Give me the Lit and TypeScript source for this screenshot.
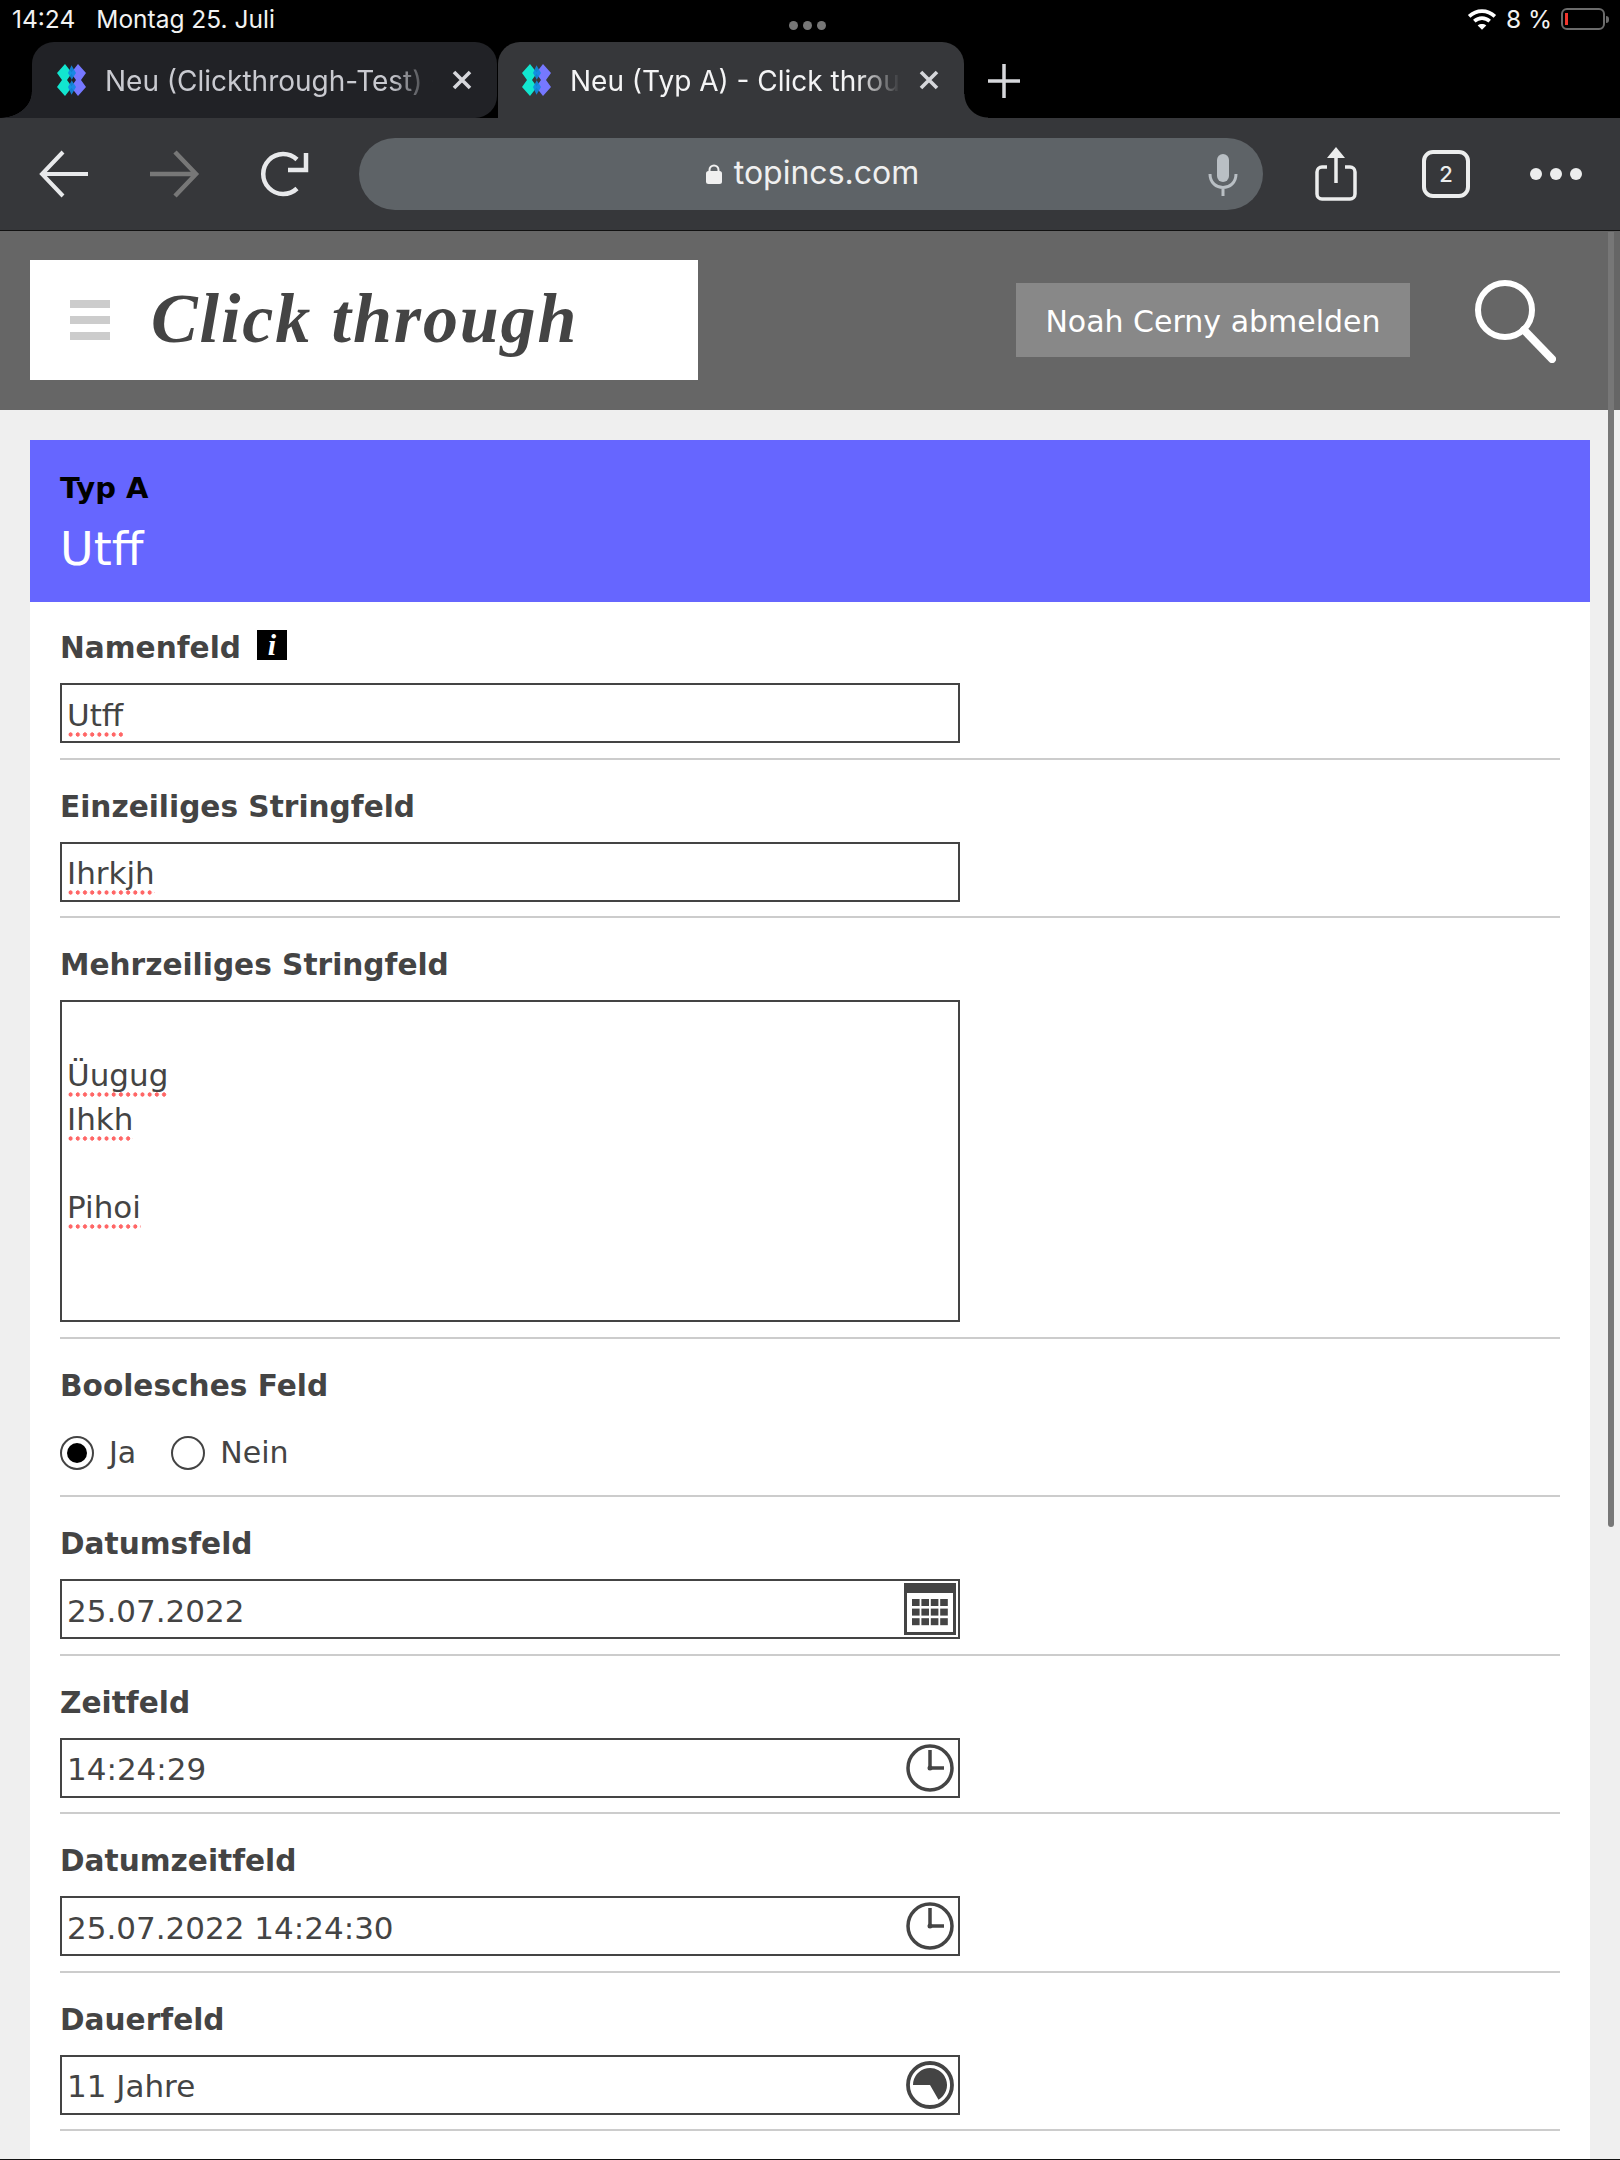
import { LitElement, html, svg, css } from 'lit';
import { customElement } from 'lit/decorators.js';

const favicon = html`<svg class="fav" width="32" height="32" viewBox="0 0 32 32">
  <path fill="#12e6cf" d="M9 0l7 9-5 7 5 7-7 9-8-9 5-7-5-7z"/>
  <path fill="#7678ff" d="M22 0l8 9-5 7 5 7-8 9-7-9 5-7-5-7z"/>
  <path fill="#0f8ae0" d="M15.500 1.300l4.500 7.700-4.500 7 4.500 7-4.500 7.700-3.500-7.700 4-7-4-7z" opacity=".9"/>
</svg>`;

const closeX = html`<svg class="close" width="22" height="22" viewBox="0 0 22 22"><path d="M3 3l16 16M19 3L3 19" stroke="#d6d7db" stroke-width="3.600" fill="none"/></svg>`;

const clock = html`<svg class="field-icon" width="52" height="52" viewBox="0 0 52 52" fill="none" stroke="#444">
  <circle cx="26" cy="26" r="22" stroke-width="3.500"/>
  <path d="M26 8v18h14" stroke-width="3.500"/>
  <circle cx="26" cy="26" r="2.500" fill="#444" stroke="none"/>
</svg>`;

const calendar = html`<svg class="field-icon" width="52" height="52" viewBox="0 0 52 52">
  <rect width="52" height="52" fill="#444"/>
  <rect x="3" y="10" width="46" height="39" fill="#fff"/>
  ${[0, 1, 2].map((r) => [0, 1, 2, 3].map((c) => svg`<rect x=${8 + c * 9.4} y=${16 + r * 9.6} width="7.600" height="7" fill="#444"/>`))}
</svg>`;

const duration = html`<svg class="field-icon" width="52" height="52" viewBox="0 0 52 52">
  <circle cx="26" cy="26" r="22" fill="none" stroke="#444" stroke-width="3.800"/>
  <path d="M26 26H9A17 17 0 1 1 34.500 40.700z" fill="#444"/>
</svg>`;

@customElement('app-root')
export class AppRoot extends LitElement {
  static styles = css`
    :host {
      display: block;
      position: relative;
      width: 1620px;
      height: 2160px;
      overflow: hidden;
      background: #efefef;
      font-family: 'DejaVu Sans', sans-serif;
      color: #444;
    }

    /* ios chrome */
    .status {
      height: 42px;
      background: #000;
      color: #f2f2f2;
      font: 24.500px Inter, sans-serif;
      position: relative;
      display: flex;
      align-items: center;
      padding: 0 15px 4px 12px;
      box-sizing: border-box;
    }
    .status .date {
      margin-left: 21px;
    }
    .status .right {
      margin-left: auto;
      display: flex;
      align-items: center;
      gap: 9px;
    }
    .dots3 {
      position: absolute;
      left: 789px;
      top: 21px;
      display: flex;
      gap: 5px;
    }
    .dots3 i {
      width: 9px;
      height: 9px;
      border-radius: 50%;
      background: #777;
    }
    .battery {
      width: 44px;
      height: 22px;
      border: 2px solid #6b6b6b;
      border-radius: 6px;
      box-sizing: border-box;
      position: relative;
    }
    .battery::before {
      content: '';
      position: absolute;
      left: 2px;
      top: 3px;
      bottom: 3px;
      width: 3px;
      background: #f0352c;
    }
    .battery::after {
      content: '';
      position: absolute;
      right: -6px;
      top: 6px;
      width: 3px;
      height: 7px;
      background: #6b6b6b;
      border-radius: 0 3px 3px 0;
    }

    .tabs {
      height: 76px;
      background: #000;
      display: flex;
      align-items: stretch;
      padding-left: 32px;
      font: 28px Inter, sans-serif;
    }
    .tab {
      position: relative;
      width: 465px;
      display: flex;
      align-items: center;
      box-sizing: border-box;
      padding: 0 24px 0 24px;
      border-radius: 22px 22px 0 0;
    }
    .tab.back {
      background: #212226;
      color: #c9cad0;
      border-radius: 22px 22px 22px 0;
      z-index: 1;
    }
    .tab.back::before {
      content: '';
      position: absolute;
      left: -32px;
      bottom: 0;
      width: 32px;
      height: 26px;
      background: radial-gradient(ellipse 32px 26px at 0 0, #000 98%, #212226 100%);
    }
    .tab.front {
      background: #36373a;
      color: #f4f4f5;
      width: 466px;
      margin-left: 1px;
      padding-left: 23px;
    }
    .tab.front::before {
      content: '';
      position: absolute;
      left: -24px;
      bottom: 0;
      width: 24px;
      height: 24px;
      background: #36373a;
      z-index: -1;
    }
    .tab.front::after {
      content: '';
      position: absolute;
      right: -24px;
      bottom: 0;
      width: 24px;
      height: 24px;
      background: radial-gradient(circle at 100% 0, #000 23px, #36373a 24px);
    }
    .tab .title {
      flex: 1;
      margin-left: 17px;
      padding-top: 2px;
      white-space: nowrap;
      overflow: hidden;
      -webkit-mask-image: linear-gradient(90deg, #000 86%, transparent 99%);
      mask-image: linear-gradient(90deg, #000 86%, transparent 99%);
    }
    .tab .close {
      margin-left: 14px;
      flex: none;
    }
    .tabs .plus {
      margin: 20px 0 0 23px;
      align-self: flex-start;
    }

    .toolbar {
      height: 112px;
      background: #36373a;
      display: flex;
      align-items: center;
      position: relative;
      border-bottom: 1px solid #111;
      box-sizing: content-box;
    }
    .toolbar svg {
      flex: none;
    }
    .url {
      width: 904px;
      height: 72px;
      border-radius: 36px;
      background: #5e6367;
      margin-left: 49px;
      color: #f0f0f0;
      font: 32px Inter, sans-serif;
      display: flex;
      align-items: center;
      justify-content: center;
      position: relative;
      gap: 12px;
      padding-left: 3px;
      box-sizing: border-box;
    }
    .url span {
      margin-top: -3px;
    }
    .url .mic {
      position: absolute;
      right: 25px;
      top: 16px;
    }
    .tabcount {
      width: 48px;
      height: 48px;
      border: 4px solid #eceded;
      border-radius: 11px;
      box-sizing: border-box;
      display: flex;
      align-items: center;
      justify-content: center;
      color: #eceded;
      font: 500 22px Inter, sans-serif;
      margin-left: 65px;
    }
    .more {
      display: flex;
      gap: 8px;
      margin-left: 60px;
    }
    .more i {
      width: 12px;
      height: 12px;
      border-radius: 50%;
      background: #eceded;
    }

    /* site header */
    .site {
      height: 179px;
      background: #666;
      display: flex;
      align-items: flex-start;
      padding: 29px 0 0 30px;
      box-sizing: border-box;
    }
    .logo {
      width: 668px;
      height: 120px;
      background: #fff;
      display: flex;
      align-items: center;
      padding-left: 40px;
      box-sizing: border-box;
    }
    .burger {
      width: 40px;
      display: flex;
      flex-direction: column;
      gap: 8px;
    }
    .burger i {
      height: 8px;
      background: #ccc;
    }
    .logo h1 {
      margin: -3px 0 0 41px;
      font: italic bold 70px 'Liberation Serif', serif;
      letter-spacing: 1.900px;
      color: #444;
    }
    .logout {
      margin: 23px 0 0 318px;
      width: 394px;
      height: 74px;
      background: #888;
      color: #fff;
      font-size: 30px;
      display: flex;
      align-items: center;
      justify-content: center;
      padding-top: 2px;
      box-sizing: border-box;
    }
    .search {
      margin: 19px 0 0 64px;
    }

    /* form */
    main {
      padding: 30px 30px 0;
    }
    .card-head {
      background: #6666ff;
      height: 162px;
      padding: 30px 30px 0;
      box-sizing: border-box;
    }
    .card-head .type {
      color: #000;
      font-weight: bold;
      font-size: 29px;
      line-height: 36px;
    }
    .card-head .name {
      color: #fff;
      font-size: 46px;
      line-height: 62px;
      margin-top: 12px;
    }
    .card-body {
      background: #fff;
      padding: 0 30px 200px;
    }
    .row {
      border-bottom: 2px solid #ccc;
      padding: 27px 0 14.500px;
      width: 1500px;
    }
    .row:first-child {
      padding-top: 26px;
    }
    .label {
      display: flex;
      align-items: center;
      font-weight: bold;
      font-size: 29.600px;
      line-height: 40px;
      margin-bottom: 15px;
      gap: 16px;
    }
    .info {
      width: 30px;
      height: 30px;
      background: #000;
      color: #fff;
      font: italic bold 30px/30px 'Liberation Serif', serif;
      text-align: center;
      margin-top: -6px;
    }
    .input {
      width: 900px;
      height: 60px;
      border: 2px solid #444;
      box-sizing: border-box;
      font-size: 31px;
      line-height: 56px;
      padding: 1.500px 0 0 5px;
      position: relative;
      background: #fff;
      white-space: nowrap;
    }
    .input.area {
      height: 322px;
      line-height: 44px;
      padding-top: 7px;
    }
    .input.area div {
      height: 44px;
    }
    .sp {
      padding-bottom: 4px;
      background: radial-gradient(circle, #f66 1.900px, transparent 2.400px) 0 100% / 7.200px 5px repeat-x;
    }
    .field-icon {
      position: absolute;
      right: 2px;
      top: 2px;
    }
    .bool {
      display: flex;
      align-items: flex-start;
      height: 60px;
      box-sizing: border-box;
      padding-top: 15px;
      font-size: 30px;
      line-height: 34px;
    }
    .radio {
      width: 34px;
      height: 34px;
      border-radius: 50%;
      border: 2px solid #444;
      box-sizing: border-box;
      display: flex;
      align-items: center;
      justify-content: center;
      margin-right: 15px;
    }
    .radio.on::before {
      content: '';
      width: 20px;
      height: 20px;
      border-radius: 50%;
      background: #000;
    }
    .bool span + .radio {
      margin-left: 35px;
    }

    .scrollbar {
      position: absolute;
      left: 1608px;
      top: 232px;
      width: 6px;
      height: 1295px;
      background: #777;
      border-radius: 0 0 3px 3px;
    }
    .edge {
      position: absolute;
      left: 0;
      right: 0;
      bottom: 0;
      height: 1px;
      background: #111;
    }
  `;

  private _field(label: string, value: string, icon: unknown) {
    return html`<div class="row">
      <div class="label">${label}</div>
      <div class="input">${value}${icon}</div>
    </div>`;
  }

  render() {
    return html`
      <div class="status">
        <span>14:24</span><span class="date">Montag 25. Juli</span>
        <div class="dots3"><i></i><i></i><i></i></div>
        <div class="right">
          <svg width="30" height="24" viewBox="0 0 28 22" fill="none" stroke="#fff" stroke-width="3.400">
            <path d="M2 8.500c7-6.500 17-6.500 24 0"/>
            <path d="M6.800 13c4.200-3.800 10.200-3.800 14.400 0"/>
            <path d="M14 21l-4-4c2.300-1.700 5.700-1.700 8 0z" fill="#fff" stroke="none"/>
          </svg>
          <span>8 %</span>
          <div class="battery"></div>
        </div>
      </div>

      <div class="tabs">
        <div class="tab back">${favicon}<span class="title">Neu (Clickthrough-Test) - Click through</span>${closeX}</div>
        <div class="tab front">${favicon}<span class="title">Neu (Typ A) - Click through</span>${closeX}</div>
        <svg class="plus" width="34" height="38" viewBox="0 0 34 38"><path d="M17 2v34M1 19h32" stroke="#d6d7db" stroke-width="3.500"/></svg>
      </div>

      <div class="toolbar">
        <svg style="margin-left:38px" width="52" height="48" viewBox="0 0 52 48" fill="none" stroke="#e8e9eb" stroke-width="4"><path d="M50 24H4M25 2L4 24l21 22"/></svg>
        <svg style="margin-left:58px" width="52" height="48" viewBox="0 0 52 48" fill="none" stroke="#777" stroke-width="4.500"><path d="M2 24h46M27 2l21 22-21 22"/></svg>
        <svg style="margin-left:60px" width="50" height="48" viewBox="0 0 50 48" fill="none" stroke="#e8e9eb" stroke-width="4.500"><path d="M37 38.500A20 20 0 1 1 37 9.500"/><path d="M28 20H46V3"/></svg>
        <div class="url">
          <svg width="16" height="20" viewBox="0 0 16 20"><path d="M3.500 8V6a4.500 4.500 0 0 1 9 0v2" fill="none" stroke="#f0f0f0" stroke-width="2"/><rect y="7" width="16" height="13" rx="2.500" fill="#f0f0f0"/></svg>
          <span>topincs.com</span>
          <svg class="mic" width="30" height="42" viewBox="0 0 30 42" fill="none" stroke="#b9bfc4" stroke-width="3"><rect x="9" y="0" width="12" height="28" rx="6" fill="#b9bfc4" stroke="none"/><path d="M2 20c0 18 26 18 26 0M15 32v10"/></svg>
        </div>
        <svg style="margin-left:52px" width="42" height="54" viewBox="0 0 42 54" fill="none" stroke="#eceded" stroke-width="3.500"><path d="M12 20H7a5 5 0 0 0-5 5v22a5 5 0 0 0 5 5h28a5 5 0 0 0 5-5V25a5 5 0 0 0-5-5h-5"/><path d="M21 36V4"/><path d="M21 0l9 11H12z" fill="#eceded" stroke="none"/></svg>
        <div class="tabcount">2</div>
        <div class="more"><i></i><i></i><i></i></div>
      </div>

      <div class="site">
        <div class="logo">
          <div class="burger"><i></i><i></i><i></i></div>
          <h1>Click through</h1>
        </div>
        <div class="logout">Noah Cerny abmelden</div>
        <svg class="search" width="82" height="84" viewBox="0 0 82 84" fill="none" stroke="#fff"><circle cx="31" cy="31" r="27" stroke-width="6"/><path d="M50 51l28 29" stroke-width="8" stroke-linecap="round"/></svg>
      </div>

      <main>
        <div class="card-head">
          <div class="type">Typ A</div>
          <div class="name">Utff</div>
        </div>
        <div class="card-body">
          <div class="row">
            <div class="label">Namenfeld <span class="info">i</span></div>
            <div class="input"><span class="sp">Utff</span></div>
          </div>
          <div class="row">
            <div class="label">Einzeiliges Stringfeld</div>
            <div class="input"><span class="sp">Ihrkjh</span></div>
          </div>
          <div class="row">
            <div class="label">Mehrzeiliges Stringfeld</div>
            <div class="input area">
              <div></div>
              <div><span class="sp">Üugug</span></div>
              <div><span class="sp">Ihkh</span></div>
              <div></div>
              <div><span class="sp">Pihoi</span></div>
            </div>
          </div>
          <div class="row">
            <div class="label">Boolesches Feld</div>
            <div class="bool">
              <div class="radio on"></div><span>Ja</span>
              <div class="radio"></div><span>Nein</span>
            </div>
          </div>
          ${this._field('Datumsfeld', '25.07.2022', calendar)}
          ${this._field('Zeitfeld', '14:24:29', clock)}
          ${this._field('Datumzeitfeld', '25.07.2022 14:24:30', clock)}
          ${this._field('Dauerfeld', '11 Jahre', duration)}
        </div>
      </main>
      <div class="scrollbar"></div>
      <div class="edge"></div>
    `;
  }
}
